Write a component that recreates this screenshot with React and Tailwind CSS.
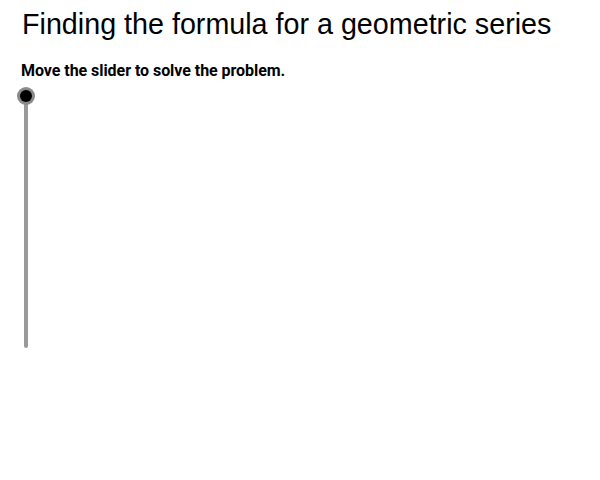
export default function App() {
  return (
    <div className="w-[600px] h-[480px] bg-white relative overflow-hidden">
      <h1 className="pl-[22px] pt-[6px] text-[28.7px] leading-[36px] text-black font-['Liberation_Sans',sans-serif] font-normal whitespace-nowrap">
        Finding the formula for a geometric series
      </h1>
      <p className="pl-[21px] pt-[20px] text-[16px] leading-[18px] font-bold text-black font-['Roboto',sans-serif] tracking-[-0.05px]">
        Move the slider to solve the problem.
      </p>
      {/* vertical slider */}
      <div className="relative ml-[17px] mt-[7px] w-[18px] h-[262px]">
        <div className="absolute left-[7px] top-[9px] w-[4px] h-[252px] bg-[#9a9a9a] rounded-b-sm" />
        <div className="absolute left-0 top-0 w-[18px] h-[18px] rounded-full bg-[#8a8a8a] flex items-center justify-center">
          <div className="w-[12px] h-[12px] rounded-full bg-black" />
        </div>
      </div>
    </div>
  );
}
